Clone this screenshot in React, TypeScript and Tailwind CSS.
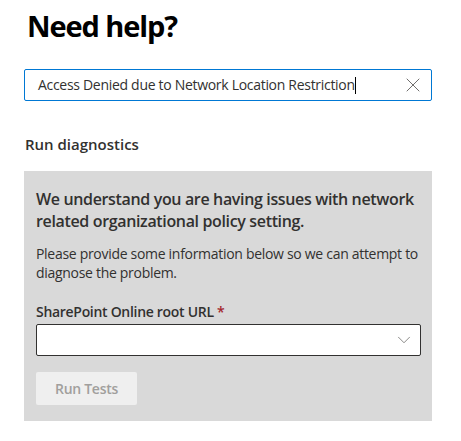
import { X, ChevronDown } from 'lucide-react';

const font = { fontFamily: '"Segoe UI", "Open Sans", "Noto Sans", sans-serif' };

export default function App() {
  return (
    <div className="w-[461px] h-[441px] bg-white text-[#323130]" style={font}>
      <div className="pl-6 pr-[29px] pt-[6px]">
        <h1 className="text-[29px] font-bold leading-[40px] text-black pl-[3px] tracking-[-1.1px]">Need help?</h1>
        <div className="mt-[23px] h-8 border border-[#0078d4] rounded-[2px] flex items-center pl-[13px] pr-[6px]">
          <span className="flex-1 text-[14px] leading-5 whitespace-nowrap tracking-[-0.3px]">
            Access Denied due to Network Location Restriction
            <span className="inline-block w-px h-[17px] bg-black align-middle -mt-[2px]" />
          </span>
          <X size={24} strokeWidth={0.9} className="text-[#605e5c]" />
        </div>
        <h2 className="mt-[33px] text-[15px] font-semibold leading-5 pl-px">Run diagnostics</h2>
        <div className="mt-[17px] bg-[#d9d9d9] pl-[12px] pr-[11px] pt-[17px] pb-[16px]">
          <p className="text-[16px] font-semibold leading-[22px] tracking-[-0.35px]">
            We understand you are having issues with network related organizational policy setting.
          </p>
          <p className="mt-[12px] text-[14px] leading-[19px] tracking-[-0.3px]">
            Please provide some information below so we can attempt to diagnose the problem.
          </p>
          <label className="block mt-[20px] text-[14px] font-semibold leading-5 tracking-[-0.3px]">
            SharePoint Online root URL <span className="text-[#a4262c]">*</span>
          </label>
          <div className="mt-[2px] h-8 bg-white border border-[#323130] rounded-[2px] flex items-center justify-end pr-[5px]">
            <ChevronDown size={22} strokeWidth={0.8} className="text-[#605e5c]" />
          </div>
          <button className="mt-[16px] h-[33px] w-[101px] bg-[#efefef] rounded-[2px] text-[14px] font-semibold text-[#a19f9d] tracking-[-0.3px]">
            Run Tests
          </button>
        </div>
      </div>
    </div>
  );
}
